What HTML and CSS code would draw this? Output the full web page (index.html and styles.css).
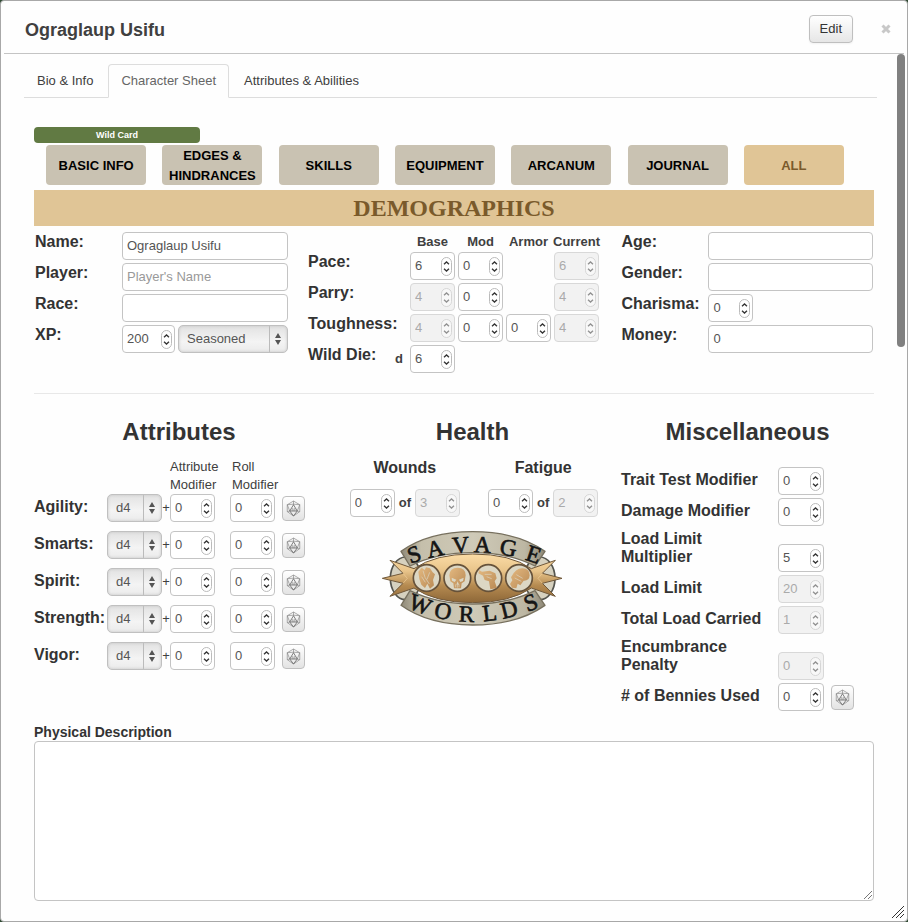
FILE: index.html
```html
<!DOCTYPE html>
<html lang="en">
<head>
<meta charset="utf-8">
<title>Ograglaup Usifu</title>
<link rel="stylesheet" href="styles.css">
</head>
<body>
<svg class="defs" aria-hidden="true">
  <symbol id="spin" viewBox="0 0 11 19">
    <rect x=".5" y=".5" width="10" height="18" rx="5" fill="#fff" stroke="#bbb"/>
    <path d="M3 7.3 5.5 5 8 7.3M3 11.7 5.5 14 8 11.7" fill="none" stroke="#333" stroke-width="1.3"/>
  </symbol>
  <symbol id="updown" viewBox="0 0 6 12">
    <path d="M3 0 6 5H0zM3 12 6 7H0z" fill="#555"/>
  </symbol>
  <symbol id="d20" viewBox="0 0 24 26">
    <g fill="none" stroke="#888" stroke-width="1.1" stroke-linejoin="round">
      <path d="M12 1 22 7V18L12 25 2 18V7z"/>
      <path d="M12 1V7M2 7 12 6 22 7M2 7 6 17 2 18M22 7 18 17 22 18"/>
    </g>
    <path d="M12 7 18 17H6zM6 17 12 25 18 17" fill="none" stroke="#666" stroke-width="1.3" stroke-linejoin="round"/>
    <path d="M9 13.5h2.5M12.5 13.5H15M9 15.5h6" stroke="#777" stroke-width="1"/>
  </symbol>
</svg>

<main class="dialog">
  <header class="titlebar">
    <h1>Ograglaup Usifu</h1>
    <button class="edit" type="button">Edit</button>
    <button class="close" type="button" aria-label="Close"><svg viewBox="0 0 10 10"><path d="M1.5 1.5 8.5 8.5M8.5 1.5 1.5 8.5"/></svg></button>
  </header>

  <div class="body">
    <ul class="tabs">
      <li><a href="#">Bio &amp; Info</a></li>
      <li class="active"><a href="#">Character Sheet</a></li>
      <li><a href="#">Attributes &amp; Abilities</a></li>
    </ul>

    <div class="sheet">
      <div class="wild">Wild Card</div>
      <nav class="pages">
        <button type="button">BASIC INFO</button>
        <button type="button">EDGES &amp; HINDRANCES</button>
        <button type="button">SKILLS</button>
        <button type="button">EQUIPMENT</button>
        <button type="button">ARCANUM</button>
        <button type="button">JOURNAL</button>
        <button type="button" class="current">ALL</button>
      </nav>
      <h2 class="banner">DEMOGRAPHICS</h2>

      <section class="demographics">
        <div class="fields">
          <label for="name">Name:</label><input id="name" type="text" value="Ograglaup Usifu">
          <label for="player">Player:</label><input id="player" type="text" placeholder="Player's Name">
          <label for="race">Race:</label><input id="race" type="text">
          <label for="xp">XP:</label>
          <div class="pair">
            <span class="num wide"><input id="xp" type="number" value="200"><svg><use href="#spin"/></svg></span>
            <span class="pick rank"><select aria-label="Rank"><option>Seasoned</option></select><svg><use href="#updown"/></svg></span>
          </div>
        </div>

        <div class="derived">
          <span></span><b>Base</b><b>Mod</b><b>Armor</b><b>Current</b>
          <label for="pace">Pace:</label>
          <span class="num"><input id="pace" type="number" value="6"><svg><use href="#spin"/></svg></span>
          <span class="num"><input aria-label="Pace mod" type="number" value="0"><svg><use href="#spin"/></svg></span>
          <span></span>
          <span class="num"><input aria-label="Pace current" type="number" value="6" disabled><svg><use href="#spin"/></svg></span>
          <label for="parry">Parry:</label>
          <span class="num"><input id="parry" type="number" value="4" disabled><svg><use href="#spin"/></svg></span>
          <span class="num"><input aria-label="Parry mod" type="number" value="0"><svg><use href="#spin"/></svg></span>
          <span></span>
          <span class="num"><input aria-label="Parry current" type="number" value="4" disabled><svg><use href="#spin"/></svg></span>
          <label for="tough">Toughness:</label>
          <span class="num"><input id="tough" type="number" value="4" disabled><svg><use href="#spin"/></svg></span>
          <span class="num"><input aria-label="Toughness mod" type="number" value="0"><svg><use href="#spin"/></svg></span>
          <span class="num"><input aria-label="Toughness armor" type="number" value="0"><svg><use href="#spin"/></svg></span>
          <span class="num"><input aria-label="Toughness current" type="number" value="4" disabled><svg><use href="#spin"/></svg></span>
          <div class="die"><label for="wilddie">Wild Die:</label><b>d</b></div>
          <span class="num"><input id="wilddie" type="number" value="6"><svg><use href="#spin"/></svg></span>
        </div>

        <div class="fields">
          <label for="age">Age:</label><input id="age" type="text">
          <label for="gender">Gender:</label><input id="gender" type="text">
          <label for="charisma">Charisma:</label>
          <span class="num"><input id="charisma" type="number" value="0"><svg><use href="#spin"/></svg></span>
          <label for="money">Money:</label><input id="money" type="text" value="0">
        </div>
      </section>

      <hr>

      <section class="stats">
        <div>
          <h3>Attributes</h3>
          <div class="traits">
            <span class="modhead">Attribute<br>Modifier</span><span class="rollhead">Roll<br>Modifier</span>

            <label for="agility">Agility:</label>
            <span class="pick"><select id="agility"><option>d4</option></select><svg><use href="#updown"/></svg></span><i>+</i>
            <span class="num"><input aria-label="Agility modifier" type="number" value="0"><svg><use href="#spin"/></svg></span>
            <span class="num roll"><input aria-label="Agility roll modifier" type="number" value="0"><svg><use href="#spin"/></svg></span>
            <button class="dice" type="button" aria-label="Roll Agility"><svg><use href="#d20"/></svg></button>

            <label for="smarts">Smarts:</label>
            <span class="pick"><select id="smarts"><option>d4</option></select><svg><use href="#updown"/></svg></span><i>+</i>
            <span class="num"><input aria-label="Smarts modifier" type="number" value="0"><svg><use href="#spin"/></svg></span>
            <span class="num roll"><input aria-label="Smarts roll modifier" type="number" value="0"><svg><use href="#spin"/></svg></span>
            <button class="dice" type="button" aria-label="Roll Smarts"><svg><use href="#d20"/></svg></button>

            <label for="spirit">Spirit:</label>
            <span class="pick"><select id="spirit"><option>d4</option></select><svg><use href="#updown"/></svg></span><i>+</i>
            <span class="num"><input aria-label="Spirit modifier" type="number" value="0"><svg><use href="#spin"/></svg></span>
            <span class="num roll"><input aria-label="Spirit roll modifier" type="number" value="0"><svg><use href="#spin"/></svg></span>
            <button class="dice" type="button" aria-label="Roll Spirit"><svg><use href="#d20"/></svg></button>

            <label for="strength">Strength:</label>
            <span class="pick"><select id="strength"><option>d4</option></select><svg><use href="#updown"/></svg></span><i>+</i>
            <span class="num"><input aria-label="Strength modifier" type="number" value="0"><svg><use href="#spin"/></svg></span>
            <span class="num roll"><input aria-label="Strength roll modifier" type="number" value="0"><svg><use href="#spin"/></svg></span>
            <button class="dice" type="button" aria-label="Roll Strength"><svg><use href="#d20"/></svg></button>

            <label for="vigor">Vigor:</label>
            <span class="pick"><select id="vigor"><option>d4</option></select><svg><use href="#updown"/></svg></span><i>+</i>
            <span class="num"><input aria-label="Vigor modifier" type="number" value="0"><svg><use href="#spin"/></svg></span>
            <span class="num roll"><input aria-label="Vigor roll modifier" type="number" value="0"><svg><use href="#spin"/></svg></span>
            <button class="dice" type="button" aria-label="Roll Vigor"><svg><use href="#d20"/></svg></button>
          </div>
        </div>

        <div>
          <h3>Health</h3>
          <div class="health">
            <div>
              <label for="wounds">Wounds</label>
              <div class="pair">
                <span class="num"><input id="wounds" type="number" value="0"><svg><use href="#spin"/></svg></span><b>of</b>
                <span class="num"><input aria-label="Maximum wounds" type="number" value="3" disabled><svg><use href="#spin"/></svg></span>
              </div>
            </div>
            <div>
              <label for="fatigue">Fatigue</label>
              <div class="pair">
                <span class="num"><input id="fatigue" type="number" value="0"><svg><use href="#spin"/></svg></span><b>of</b>
                <span class="num"><input aria-label="Maximum fatigue" type="number" value="2" disabled><svg><use href="#spin"/></svg></span>
              </div>
            </div>
          </div>
          <svg class="logo" viewBox="21 30 543 291" role="img" aria-label="Savage Worlds">
            <defs>
              <linearGradient id="gold" x1="0" y1="0" x2="0" y2="1">
                <stop offset="0" stop-color="#fbdca6"/><stop offset=".35" stop-color="#e8c48a"/><stop offset=".65" stop-color="#b58a50"/><stop offset="1" stop-color="#8d6738"/>
              </linearGradient>
              <linearGradient id="coin" x1="0" y1="0" x2="1" y2="1">
                <stop offset="0" stop-color="#e3b880"/><stop offset="1" stop-color="#b98a55"/>
              </linearGradient>
              <linearGradient id="stone" x1="0" x2="1" y1="0" y2="0">
                <stop offset="0" stop-color="#8f8978"/><stop offset=".14" stop-color="#c5bfab"/><stop offset=".5" stop-color="#cfcab8"/><stop offset=".86" stop-color="#bdb7a3"/><stop offset="1" stop-color="#8f8978"/>
              </linearGradient>
              <path id="arcTop" d="M104 133Q293 60 490 133"/>
              <path id="arcBottom" d="M96 262Q293 352 506 256"/>
            </defs>
            <g fill="#d6d1bf" stroke="#55554f" stroke-width="5">
              <ellipse cx="92" cy="175" rx="46" ry="64"/>
              <ellipse cx="494" cy="175" rx="46" ry="64"/>
            </g>
            <g fill="url(#stone)" stroke="#77705e" stroke-width="4" stroke-linejoin="round">
              <path d="M78 94Q160 35 293 35T510 94L480 138Q400 98 293 98T105 138z"/>
              <path d="M78 256Q160 315 293 315T510 256L480 212Q400 252 293 252T105 212z"/>
            </g>
            <path d="M22 175 84 160 45 121 117 146Q180 102 293 102T469 146L541 121 502 160 561 175 502 190 541 229 469 204Q406 248 293 248T117 204L45 229 84 190z" fill="url(#gold)" stroke="#70583a" stroke-width="3"/>
            <path d="M84 160 97 175 84 190M502 160 489 175 502 190" fill="none" stroke="#f1cf98" stroke-width="2"/>
            <g fill="#dcd7c4" stroke="#66523a" stroke-width="5">
              <circle cx="155" cy="174" r="40"/><circle cx="247" cy="174" r="40"/><circle cx="340" cy="174" r="40"/><circle cx="432" cy="174" r="40"/>
            </g>
            <g fill="url(#coin)">
              <path d="M130 155 140 143 149 150 153 142 165 145 173 157 180 163 174 180 177 196 165 206 157 191 150 204 139 194 133 177z"/>
              <path fill-rule="evenodd" d="M223 166Q224 143 248 143T272 166L269 184 260 190 258 205H237L235 190 226 184zM230 173 244 179 239 186 231 182zM252 179 266 173 264 183 256 186zM248 184 252 194H244z"/>
              <path d="M312 150 321 155 344 152 361 160 365 175 359 184 366 204 346 208 342 184 329 180 324 167 310 160z"/>
              <path d="M405 192 412 181 408 172Q422 144 443 145T464 166Q463 183 446 182L436 196 428 191 424 205 411 203z"/>
            </g>
            <g fill="none" stroke="#dcd7c4" stroke-width="2">
              <path d="M144 152 150 172 163 192M164 157 156 178M140 170 151 187M329 163H350M335 170 350 176M419 174 439 184M424 164 443 175M242 193V202M247 195V203M252 193V202"/>
            </g>
            <g class="wordmark">
              <text x="3 60 134 197 272 351"><textPath href="#arcTop">SAVAGE</textPath></text>
              <text x="1 84 161 236 294 371"><textPath href="#arcBottom">WORLDS</textPath></text>
            </g>
          </svg>
        </div>

        <div>
          <h3>Miscellaneous</h3>
          <div class="misc">
            <label for="trait">Trait Test Modifier</label>
            <span class="num"><input id="trait" type="number" value="0"><svg><use href="#spin"/></svg></span>
            <label for="damage">Damage Modifier</label>
            <span class="num"><input id="damage" type="number" value="0"><svg><use href="#spin"/></svg></span>
            <label for="mult" class="two">Load Limit<br>Multiplier</label>
            <span class="num"><input id="mult" type="number" value="5"><svg><use href="#spin"/></svg></span>
            <label for="limit">Load Limit</label>
            <span class="num"><input id="limit" type="number" value="20" disabled><svg><use href="#spin"/></svg></span>
            <label for="carried">Total Load Carried</label>
            <span class="num"><input id="carried" type="number" value="1" disabled><svg><use href="#spin"/></svg></span>
            <label for="penalty" class="two">Encumbrance<br>Penalty</label>
            <span class="num"><input id="penalty" type="number" value="0" disabled><svg><use href="#spin"/></svg></span>
            <label for="bennies"># of Bennies Used</label>
            <span class="num"><input id="bennies" type="number" value="0"><svg><use href="#spin"/></svg></span>
            <button class="dice" type="button" aria-label="Use a benny"><svg><use href="#d20"/></svg></button>
          </div>
        </div>
      </section>

      <label class="desc" for="description">Physical Description</label>
      <div class="area">
        <textarea id="description"></textarea>
        <svg class="grip" viewBox="0 0 8 8"><path d="M0 8 8 0M4 8 8 4"/></svg>
      </div>
    </div>
  </div>
  <div class="thumb"></div>
  <svg class="resize" viewBox="0 0 12 12"><path d="M0 12 12 0M4 12 12 4M8 12 12 8"/></svg>
</main>
</body>
</html>
```

FILE: styles.css
```css
* { box-sizing: border-box; }

body {
  margin: 0;
  background: #2f4a33;
  color: #404040;
  font: 13px/18px "Liberation Sans", Helvetica, Arial, sans-serif;
}

input, select, textarea, button { font: inherit; color: #555; margin: 0; }

.defs { position: absolute; width: 0; height: 0; }

.dialog {
  position: relative;
  min-height: 100vh;
  border: 1px solid #a8a8a8;
  border-radius: 4px;
  background: #fefefe;
}

/* title bar */
.titlebar {
  display: flex;
  align-items: center;
  height: 53px;
  margin: 0 3px;
  padding: 4px 13px 0 21px;
  border-bottom: 1px solid #c4c4c4;
}
.titlebar h1 { flex: 1; margin: 0; padding-top: 2px; font-size: 18px; line-height: 24px; }
.edit {
  height: 28px;
  padding: 0 10px;
  border: 1px solid #bfbfbf;
  border-radius: 4px;
  background: linear-gradient(#fff, #e6e6e6);
  box-shadow: 0 1px 2px rgba(0, 0, 0, .05);
  color: #333;
}
.close { width: 10px; height: 10px; margin-left: 28px; padding: 0; border: 0; background: none; line-height: 0; }
.close svg { width: 10px; height: 10px; stroke: #c8c8c8; stroke-width: 3; }

.body { padding: 10px 30px 20px 23px; }

/* tabs */
.tabs {
  display: flex;
  margin: 0;
  padding: 0;
  border-bottom: 1px solid #ddd;
  list-style: none;
}
.tabs li { margin: 0 2px -1px 0; }
.tabs a {
  display: block;
  padding: 7px 12px;
  border: 1px solid transparent;
  border-radius: 4px 4px 0 0;
  color: #404040;
  text-decoration: none;
}
.tabs .active a { border-color: #ddd #ddd #fefefe; background: #fefefe; color: #666; }

/* sheet */
.sheet { margin: 29px 3px 0 10px; }
.wild {
  width: 166px;
  border-radius: 4px;
  background: #617a43;
  color: #fff;
  font-size: 9px;
  font-weight: bold;
  line-height: 17px;
  height: 16px;
  text-align: center;
}
.pages {
  display: grid;
  grid-template-columns: repeat(7, 1fr);
  justify-items: center;
  margin-top: 2px;
  padding: 0 22px 0 4px;
}
.pages button {
  width: 100px;
  height: 40px;
  padding: 1px 0 0;
  border: 0;
  border-radius: 4px;
  background: #c9c2b2;
  color: #000;
  font-weight: bold;
  line-height: 20px;
}
.pages .current { background: #e0c596; color: #7a5a2b; }
.banner {
  margin: 5px 0 0;
  background: #e0c596;
  color: #7a5a2b;
  font: bold 24px/36px "Liberation Serif", "Times New Roman", serif;
  text-align: center;
}

/* controls */
.sheet input, .sheet select, .sheet textarea {
  width: 100%;
  border: 1px solid #c4c4c4;
  border-radius: 4px;
  background: #fff;
}
.sheet input, .sheet select { display: block; height: 28px; padding: 0 4px 1px; }
.sheet input::placeholder { color: #999; opacity: 1; }
.num { position: relative; width: 45px; }
.num input { appearance: textfield; -moz-appearance: textfield; }
.num input::-webkit-inner-spin-button { appearance: none; display: none; }
.num svg { position: absolute; top: 5px; right: 3px; width: 11px; height: 19px; pointer-events: none; }
.sheet input:disabled { border-color: #d8d8d8; background: #f2f2f2; color: #aaa; }
.num input:disabled + svg { opacity: .5; }
.wide { width: 53px; }

.pick { position: relative; width: 55px; }
.sheet .pick select {
  padding: 0 8px;
  appearance: none;
  border-color: #c0c0c0;
  border-radius: 5px;
  background:
    linear-gradient(#bbb, #bbb) right 17px top / 1px 100% no-repeat,
    linear-gradient(#e2e2e2, #f4f4f4 60%, #ebebeb);
  box-shadow: inset 0 0 3px #c4c4c4;
}
.pick svg { position: absolute; top: 8px; right: 7px; width: 6px; height: 12px; pointer-events: none; }
.rank { width: 110px; }

.dice {
  display: grid;
  place-items: center;
  width: 23px;
  height: 25px;
  padding: 0;
  border: 1px solid #bfbfbf;
  border-radius: 4px;
  background: linear-gradient(#fff, #e3e3e3);
}
.dice svg { width: 15px; height: 17px; }

.fields label, .derived label, .traits label, .health label, .misc label {
  color: #333;
  font-size: 16px;
  font-weight: bold;
  line-height: 20px;
  white-space: nowrap;
}

/* demographics */
.demographics {
  display: grid;
  grid-template-columns: 273fr 313fr 254fr;
  padding-top: 6px;
}
.fields {
  display: grid;
  grid-template-columns: 87px 1fr;
  align-content: start;
  gap: 3px 0;
}
.fields:first-child { padding: 0 20px 0 1px; }
.fields:last-child { padding: 0 1px; }
.pair { display: flex; gap: 3px; }
.derived {
  display: grid;
  grid-template-columns: 99px 45px 45px 45px 45px;
  grid-template-rows: 17px repeat(4, 28px);
  gap: 3px;
}
.derived > b { line-height: 20px; text-align: center; justify-self: center; white-space: nowrap; }
.die { display: flex; justify-content: space-between; padding-right: 4px; }
.die b { line-height: 28px; }

hr { margin: 20px 0 0; border: 0; border-top: 1px solid #e8e8e8; }

/* statistics */
.stats { display: grid; grid-template-columns: 290fr 297fr 253fr; padding-top: 18px; }
h3 { margin: 0; color: #333; font-size: 24px; line-height: 40px; text-align: center; }

.traits {
  display: grid;
  grid-template-columns: 73px 55px 8px 60px 52px 23px;
  row-gap: 9px;
  margin-top: 6px;
}
.traits .modhead { grid-column: 4; margin-bottom: -9px; }
.traits .rollhead { grid-column: 5 / 7; margin-bottom: -9px; padding-left: 2px; }
.traits label { padding-top: 3px; }
.traits i { font-style: normal; line-height: 28px; text-align: center; }
.traits .dice { margin-top: 2px; }

.health { display: flex; justify-content: center; gap: 28px; margin-top: 6px; padding-left: 3px; text-align: center; }
.health .pair { gap: 4px; margin-top: 11px; }
.health b { line-height: 28px; }
.logo { display: block; width: 181px; height: 97px; margin: 13px auto 0; }
.wordmark {
  fill: #151515;
  stroke: #151515;
  stroke-width: 2;
  font: 70px "Liberation Serif", "Times New Roman", serif;
}

.misc {
  display: grid;
  grid-template-columns: 157px 46px 1fr;
  align-items: end;
  gap: 3px 0;
  margin-top: 15px;
}
.misc label { grid-column: 1; align-self: start; padding-top: 3px; }
.misc .two { padding: 1px 0 6px; line-height: 18px; }
.misc .num { width: 46px; }
.misc .dice { margin: 0 0 1px 7px; }

.desc { display: block; margin-top: 12px; font-size: 14px; font-weight: bold; line-height: 18px; color: #333; }
.area { position: relative; }
.sheet textarea { display: block; height: 160px; padding: 4px; resize: none; }
.grip { position: absolute; right: 2px; bottom: 2px; width: 8px; height: 8px; fill: none; stroke: #777; stroke-width: 1; }

/* window furniture */
.thumb { position: absolute; top: 53px; right: 2px; width: 8px; height: 293px; border-radius: 4px; background: #808080; }
.resize { position: absolute; right: 3px; bottom: 3px; width: 12px; height: 12px; fill: none; stroke: #333; stroke-width: 1; }
```
